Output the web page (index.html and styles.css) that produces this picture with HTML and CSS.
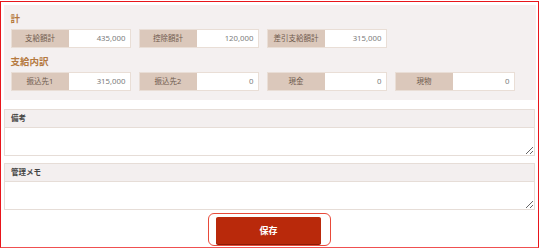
FILE: index.html
```html
<!DOCTYPE html>
<html lang="ja">
<head>
<meta charset="utf-8">
<link rel="stylesheet" href="styles.css">
</head>
<body>
<div class="frame">
  <div class="panel">
    <div class="heading">計</div>
    <div class="row">
      <div class="field"><span class="label">支給額計</span><span class="value">435,000</span></div>
      <div class="field"><span class="label">控除額計</span><span class="value">120,000</span></div>
      <div class="field"><span class="label">差引支給額計</span><span class="value">315,000</span></div>
    </div>
    <div class="heading heading-2">支給内訳</div>
    <div class="row">
      <div class="field"><span class="label">振込先1</span><span class="value">315,000</span></div>
      <div class="field"><span class="label">振込先2</span><span class="value">0</span></div>
      <div class="field"><span class="label">現金</span><span class="value">0</span></div>
      <div class="field"><span class="label">現物</span><span class="value">0</span></div>
    </div>
  </div>
  <div class="memo memo-first">
    <div class="memo-head">備考</div>
    <textarea class="memo-text"></textarea>
  </div>
  <div class="memo">
    <div class="memo-head">管理メモ</div>
    <textarea class="memo-text"></textarea>
  </div>
  <div class="actions">
    <span class="ring"><button class="save">保存</button></span>
  </div>
</div>
</body>
</html>
```
FILE: styles.css
```css
html, body {
  margin: 0;
  padding: 0;
  background: #ffffff;
  font-family: "Noto Sans", "Noto Sans CJK JP", sans-serif;
}
.frame {
  box-sizing: border-box;
  width: 539px;
  height: 247px;
  margin-top: 1px;
  border: 1.5px solid #e8151b;
  border-bottom-color: #f05050;
  padding: 2.5px 2.5px 0 2.5px;
}
.panel {
  background: #f4f0f0;
  padding: 8px 7px 9px 7px;
}
.heading {
  font-size: 9.5px;
  line-height: 12px;
  font-weight: bold;
  color: #b5793f;
  margin-bottom: 4px;
}
.heading-2 {
  margin-top: 8px;
}
.row {
  display: flex;
  gap: 8px;
}
.field {
  display: flex;
  width: 120px;
  height: 19px;
  box-sizing: border-box;
  border: 1px solid #e9ded6;
  background: #fff;
}
.label {
  width: 57px;
  background: #dbc8bb;
  color: #6f5a4e;
  font-size: 7.5px;
  line-height: 17px;
  text-align: center;
}
.value {
  flex: 1;
  color: #7c7c7c;
  font-size: 7.8px;
  line-height: 17px;
  text-align: right;
  padding-right: 4px;
}
.memo {
  margin: 7px 0.5px 0 0.5px;
  display: flex;
  flex-direction: column;
}
.memo-first {
  margin-top: 9px;
}
.memo-head {
  box-sizing: border-box;
  height: 19px;
  flex: none;
  border: 1px solid #e6ddd7;
  background: #f3efef;
  font-size: 7.5px;
  font-weight: bold;
  color: #444;
  line-height: 17px;
  padding-left: 6px;
}
.memo-text {
  box-sizing: border-box;
  display: block;
  flex: none;
  width: 100%;
  height: 28px;
  margin: 0;
  border: 1px solid #e6ddd7;
  border-top: 0;
  background: #fff;
  outline: none;
  resize: vertical;
}
.actions {
  display: flex;
  justify-content: center;
  margin-top: 3px;
}
.ring {
  display: inline-block;
  border: 1.5px solid #e84a3a;
  border-radius: 6px;
  padding: 3px 9px 1.5px 7px;
}
.save {
  display: block;
  width: 105px;
  height: 27px;
  border: 0;
  border-radius: 2px;
  background: #b9290b;
  box-shadow: 0 1px 0 #8a1d06;
  color: #fff;
  font-family: "Noto Sans CJK JP", sans-serif;
  font-size: 9px;
  font-weight: bold;
  padding: 0;
}
```
